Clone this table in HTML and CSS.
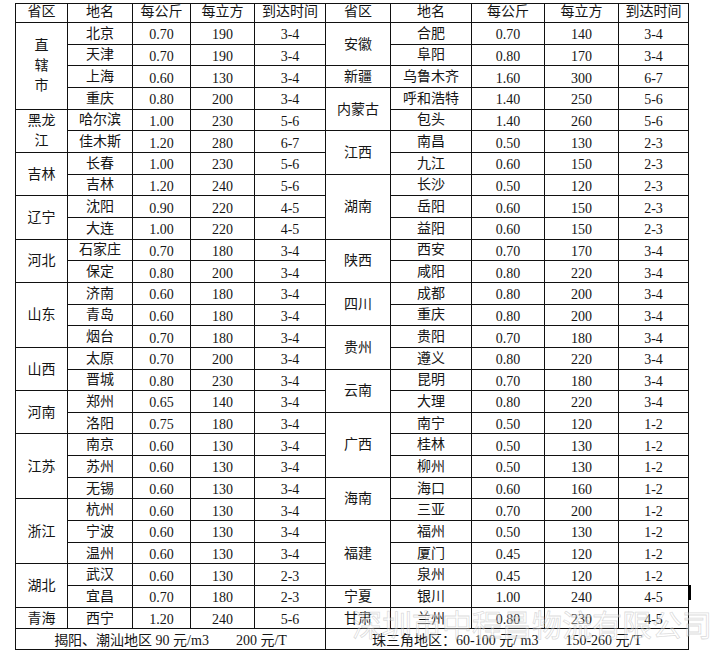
FILE: index.html
```html
<!DOCTYPE html>
<html lang="zh-CN">
<head>
<meta charset="utf-8">
<title>物流价格表</title>
<link rel="stylesheet" href="styles.css">
</head>
<body>
<div class="sheet">
<table class="rates">
<colgroup>
<col class="c1"><col class="c2"><col class="c3"><col class="c4"><col class="c5">
<col class="c6"><col class="c7"><col class="c8"><col class="c9"><col class="c10">
</colgroup>
<thead>
<tr class="head">
<td>省区</td><td>地名</td><td>每公斤</td><td>每立方</td><td>到达时间</td>
<td>省区</td><td>地名</td><td>每公斤</td><td>每立方</td><td>到达时间</td>
</tr>
</thead>
<tbody>
<tr><td rowspan="4" class="multi">直<br>辖<br>市</td><td>北京</td><td class="n">0.70</td><td class="n">190</td><td class="n">3-4</td>
<td rowspan="2">安徽</td><td>合肥</td><td class="n">0.70</td><td class="n">140</td><td class="n">3-4</td></tr>
<tr><td>天津</td><td class="n">0.70</td><td class="n">190</td><td class="n">3-4</td>
<td>阜阳</td><td class="n">0.80</td><td class="n">170</td><td class="n">3-4</td></tr>
<tr><td>上海</td><td class="n">0.60</td><td class="n">130</td><td class="n">3-4</td>
<td>新疆</td><td>乌鲁木齐</td><td class="n">1.60</td><td class="n">300</td><td class="n">6-7</td></tr>
<tr><td>重庆</td><td class="n">0.80</td><td class="n">200</td><td class="n">3-4</td>
<td rowspan="2">内蒙古</td><td>呼和浩特</td><td class="n">1.40</td><td class="n">250</td><td class="n">5-6</td></tr>
<tr><td rowspan="2" class="multi">黑龙<br>江</td><td>哈尔滨</td><td class="n">1.00</td><td class="n">230</td><td class="n">5-6</td>
<td>包头</td><td class="n">1.40</td><td class="n">260</td><td class="n">5-6</td></tr>
<tr><td>佳木斯</td><td class="n">1.20</td><td class="n">280</td><td class="n">6-7</td>
<td rowspan="2">江西</td><td>南昌</td><td class="n">0.50</td><td class="n">130</td><td class="n">2-3</td></tr>
<tr><td rowspan="2">吉林</td><td>长春</td><td class="n">1.00</td><td class="n">230</td><td class="n">5-6</td>
<td>九江</td><td class="n">0.60</td><td class="n">150</td><td class="n">2-3</td></tr>
<tr><td>吉林</td><td class="n">1.20</td><td class="n">240</td><td class="n">5-6</td>
<td rowspan="3">湖南</td><td>长沙</td><td class="n">0.50</td><td class="n">120</td><td class="n">2-3</td></tr>
<tr><td rowspan="2">辽宁</td><td>沈阳</td><td class="n">0.90</td><td class="n">220</td><td class="n">4-5</td>
<td>岳阳</td><td class="n">0.60</td><td class="n">150</td><td class="n">2-3</td></tr>
<tr><td>大连</td><td class="n">1.00</td><td class="n">220</td><td class="n">4-5</td>
<td>益阳</td><td class="n">0.60</td><td class="n">150</td><td class="n">2-3</td></tr>
<tr><td rowspan="2">河北</td><td>石家庄</td><td class="n">0.70</td><td class="n">180</td><td class="n">3-4</td>
<td rowspan="2">陕西</td><td>西安</td><td class="n">0.70</td><td class="n">170</td><td class="n">3-4</td></tr>
<tr><td>保定</td><td class="n">0.80</td><td class="n">200</td><td class="n">3-4</td>
<td>咸阳</td><td class="n">0.80</td><td class="n">220</td><td class="n">3-4</td></tr>
<tr><td rowspan="3">山东</td><td>济南</td><td class="n">0.60</td><td class="n">180</td><td class="n">3-4</td>
<td rowspan="2">四川</td><td>成都</td><td class="n">0.80</td><td class="n">200</td><td class="n">3-4</td></tr>
<tr><td>青岛</td><td class="n">0.60</td><td class="n">180</td><td class="n">3-4</td>
<td>重庆</td><td class="n">0.80</td><td class="n">200</td><td class="n">3-4</td></tr>
<tr><td>烟台</td><td class="n">0.70</td><td class="n">180</td><td class="n">3-4</td>
<td rowspan="2">贵州</td><td>贵阳</td><td class="n">0.70</td><td class="n">180</td><td class="n">3-4</td></tr>
<tr><td rowspan="2">山西</td><td>太原</td><td class="n">0.70</td><td class="n">200</td><td class="n">3-4</td>
<td>遵义</td><td class="n">0.80</td><td class="n">220</td><td class="n">3-4</td></tr>
<tr><td>晋城</td><td class="n">0.80</td><td class="n">230</td><td class="n">3-4</td>
<td rowspan="2">云南</td><td>昆明</td><td class="n">0.70</td><td class="n">180</td><td class="n">3-4</td></tr>
<tr><td rowspan="2">河南</td><td>郑州</td><td class="n">0.65</td><td class="n">140</td><td class="n">3-4</td>
<td>大理</td><td class="n">0.80</td><td class="n">220</td><td class="n">3-4</td></tr>
<tr><td>洛阳</td><td class="n">0.75</td><td class="n">180</td><td class="n">3-4</td>
<td rowspan="3">广西</td><td>南宁</td><td class="n">0.50</td><td class="n">120</td><td class="n">1-2</td></tr>
<tr><td rowspan="3">江苏</td><td>南京</td><td class="n">0.60</td><td class="n">130</td><td class="n">3-4</td>
<td>桂林</td><td class="n">0.50</td><td class="n">130</td><td class="n">1-2</td></tr>
<tr><td>苏州</td><td class="n">0.60</td><td class="n">130</td><td class="n">3-4</td>
<td>柳州</td><td class="n">0.50</td><td class="n">130</td><td class="n">1-2</td></tr>
<tr><td>无锡</td><td class="n">0.60</td><td class="n">130</td><td class="n">3-4</td>
<td rowspan="2">海南</td><td>海口</td><td class="n">0.60</td><td class="n">160</td><td class="n">1-2</td></tr>
<tr><td rowspan="3">浙江</td><td>杭州</td><td class="n">0.60</td><td class="n">130</td><td class="n">3-4</td>
<td>三亚</td><td class="n">0.70</td><td class="n">200</td><td class="n">1-2</td></tr>
<tr><td>宁波</td><td class="n">0.60</td><td class="n">130</td><td class="n">3-4</td>
<td rowspan="3">福建</td><td>福州</td><td class="n">0.50</td><td class="n">130</td><td class="n">1-2</td></tr>
<tr><td>温州</td><td class="n">0.60</td><td class="n">130</td><td class="n">3-4</td>
<td>厦门</td><td class="n">0.45</td><td class="n">120</td><td class="n">1-2</td></tr>
<tr><td rowspan="2">湖北</td><td>武汉</td><td class="n">0.60</td><td class="n">130</td><td class="n">2-3</td>
<td>泉州</td><td class="n">0.45</td><td class="n">120</td><td class="n">1-2</td></tr>
<tr><td>宜昌</td><td class="n">0.70</td><td class="n">180</td><td class="n">2-3</td>
<td>宁夏</td><td>银川</td><td class="n">1.00</td><td class="n">240</td><td class="n edge">4-5</td></tr>
<tr><td>青海</td><td>西宁</td><td class="n">1.20</td><td class="n">240</td><td class="n">5-6</td>
<td>甘肃</td><td>兰州</td><td class="n">0.80</td><td class="n">230</td><td class="n">4-5</td></tr>
</tbody>
<tfoot>
<tr class="foot">
<td colspan="5">揭阳、潮汕地区 90 元/m3<span class="gap"></span>200 元/T</td>
<td colspan="5">珠三角地区：60-100 元/ m3<span class="gap"></span>150-260 元/T</td>
</tr>
</tfoot>
</table>
<div class="watermark">深圳市中程昌物流有限公司</div>
</div>
</body>
</html>
```
FILE: styles.css
```css
html, body {
  margin: 0;
  padding: 0;
  background: #ffffff;
}

.sheet {
  position: relative;
  padding: 3px 0 0 15px;
  width: 704px;
  height: 655px;
}

.rates {
  border-collapse: collapse;
  table-layout: fixed;
  width: 674px;
  font-family: "Liberation Serif", "Noto Sans CJK SC", serif;
  font-size: 14px;
  font-weight: normal;
  color: #151515;
  opacity: 0.995;
}

.c1 { width: 52px; }
.c2 { width: 65px; }
.c3 { width: 58px; }
.c4 { width: 64px; }
.c5 { width: 71px; }
.c6 { width: 65px; }
.c7 { width: 81px; }
.c8 { width: 73px; }
.c9 { width: 74px; }
.c10 { width: 70px; }

.rates td {
  border: 1px solid #111111;
  text-align: center;
  vertical-align: middle;
  padding: 1px 0 0;
  line-height: 16px;
  white-space: nowrap;
}

.rates tbody tr {
  height: 21.67px;
}

.rates td.n {
  padding-top: 4px;
}

.rates td.multi {
  line-height: 20px;
  padding-top: 0;
}

.rates .head {
  height: 19px;
}

.rates .head td {
  padding: 0 0 2px;
}

.rates .foot {
  height: 21px;
}

.rates .foot td {
  padding: 3px 0 0;
}

.gap {
  display: inline-block;
  width: 27px;
}

.rates td.edge {
  position: relative;
}

.rates td.edge::after {
  content: "";
  position: absolute;
  right: -3px;
  top: -1px;
  width: 3px;
  height: 15px;
  background: #000000;
}

.watermark {
  position: absolute;
  left: 352px;
  top: 608px;
  font-family: "Noto Sans CJK SC", sans-serif;
  font-size: 30px;
  line-height: 30px;
  white-space: nowrap;
  color: rgba(255, 255, 255, 0.35);
  -webkit-text-stroke: 0.8px rgba(175, 175, 175, 0.45);
  pointer-events: none;
}
```
